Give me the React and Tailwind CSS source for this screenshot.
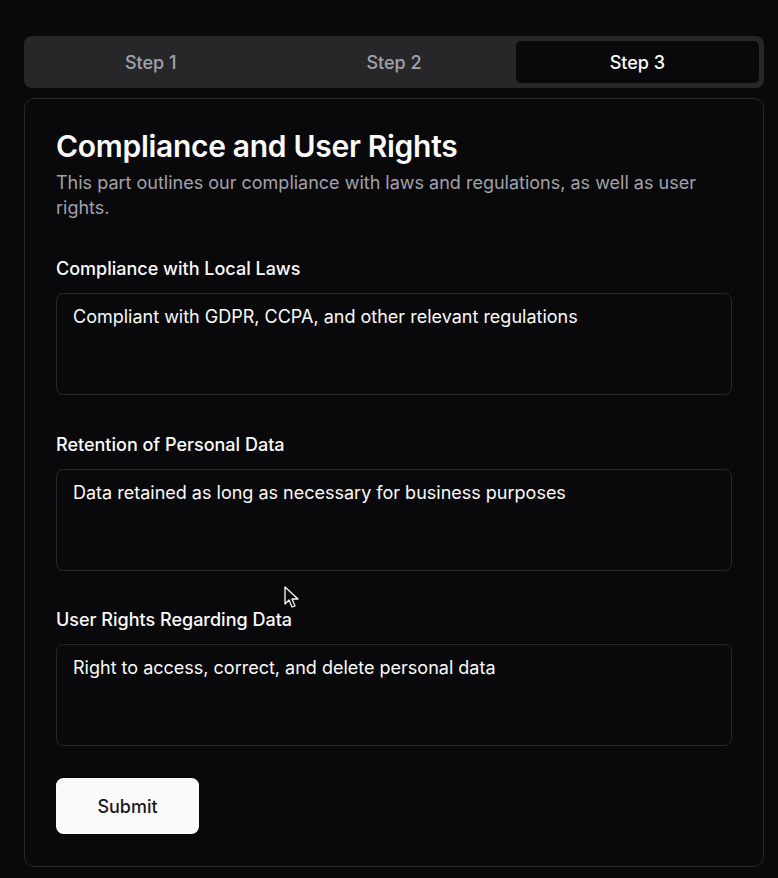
import React, { useState } from 'react';

const fields = [
  { id: 'laws', label: 'Compliance with Local Laws', value: 'Compliant with GDPR, CCPA, and other relevant regulations' },
  { id: 'retention', label: 'Retention of Personal Data', value: 'Data retained as long as necessary for business purposes' },
  { id: 'rights', label: 'User Rights Regarding Data', value: 'Right to access, correct, and delete personal data' },
];

const App = () => {
  const [tab, setTab] = useState('step3');
  const tabs = [
    { id: 'step1', label: 'Step 1' },
    { id: 'step2', label: 'Step 2' },
    { id: 'step3', label: 'Step 3' },
  ];

  return (
    <div className="relative min-h-screen bg-[#09090b] pt-[36px] pl-[24px] text-[#fafafa] font-['Inter',sans-serif]">
      <div className="w-[740px]">
        {/* Tabs */}
        <div className="grid grid-cols-3 h-[52px] p-[5px] rounded-[8px] bg-[#27272a]">
          {tabs.map((t) => (
            <button
              key={t.id}
              onClick={() => setTab(t.id)}
              className={`rounded-[5px] text-[18px] font-medium ${
                tab === t.id ? 'bg-[#09090b] text-[#fafafa]' : 'text-[#a1a1aa]'
              }`}
            >
              {t.label}
            </button>
          ))}
        </div>

        {/* Card */}
        <div className="mt-[10px] rounded-[10px] border border-[#27272a] bg-[#09090b] px-[31px] pt-[32px] pb-[32px]">
          <h2 className="text-[30px] leading-[30px] font-semibold tracking-[-0.3px]">Compliance and User Rights</h2>
          <p className="mt-[9px] text-[18px] leading-[25px] text-[#a1a1aa]">
            This part outlines our compliance with laws and regulations, as well as user rights.
          </p>

          <div className="mt-[36px] flex flex-col gap-[36.5px]">
            {fields.map((f) => (
              <div key={f.id} className="flex flex-col gap-[12px]">
                <label className="text-[18px] leading-[25px] font-medium">{f.label}</label>
                <textarea
                  defaultValue={f.value}
                  className="h-[102px] resize-none rounded-[7.5px] border border-[#27272a] bg-[#09090b] px-[16px] py-[10px] text-[18px] leading-[25px] text-[#fafafa] outline-none"
                />
              </div>
            ))}
          </div>

          <button className="mt-[32px] h-[56px] w-[143px] rounded-[7.5px] bg-[#fafafa] text-[18px] font-medium text-[#18181b]">
            Submit
          </button>
        </div>
      </div>

      {/* mouse pointer */}
      <svg className="absolute left-[284px] top-[586px]" width="16" height="24" viewBox="0 0 16 24">
        <path d="M1 1 L1 18 L5 14 L8 21 L11 20 L8 13 L14 13 Z" fill="#09090b" stroke="#fafafa" strokeWidth="1.3" strokeLinejoin="round" />
      </svg>
    </div>
  );
};

export default App;
